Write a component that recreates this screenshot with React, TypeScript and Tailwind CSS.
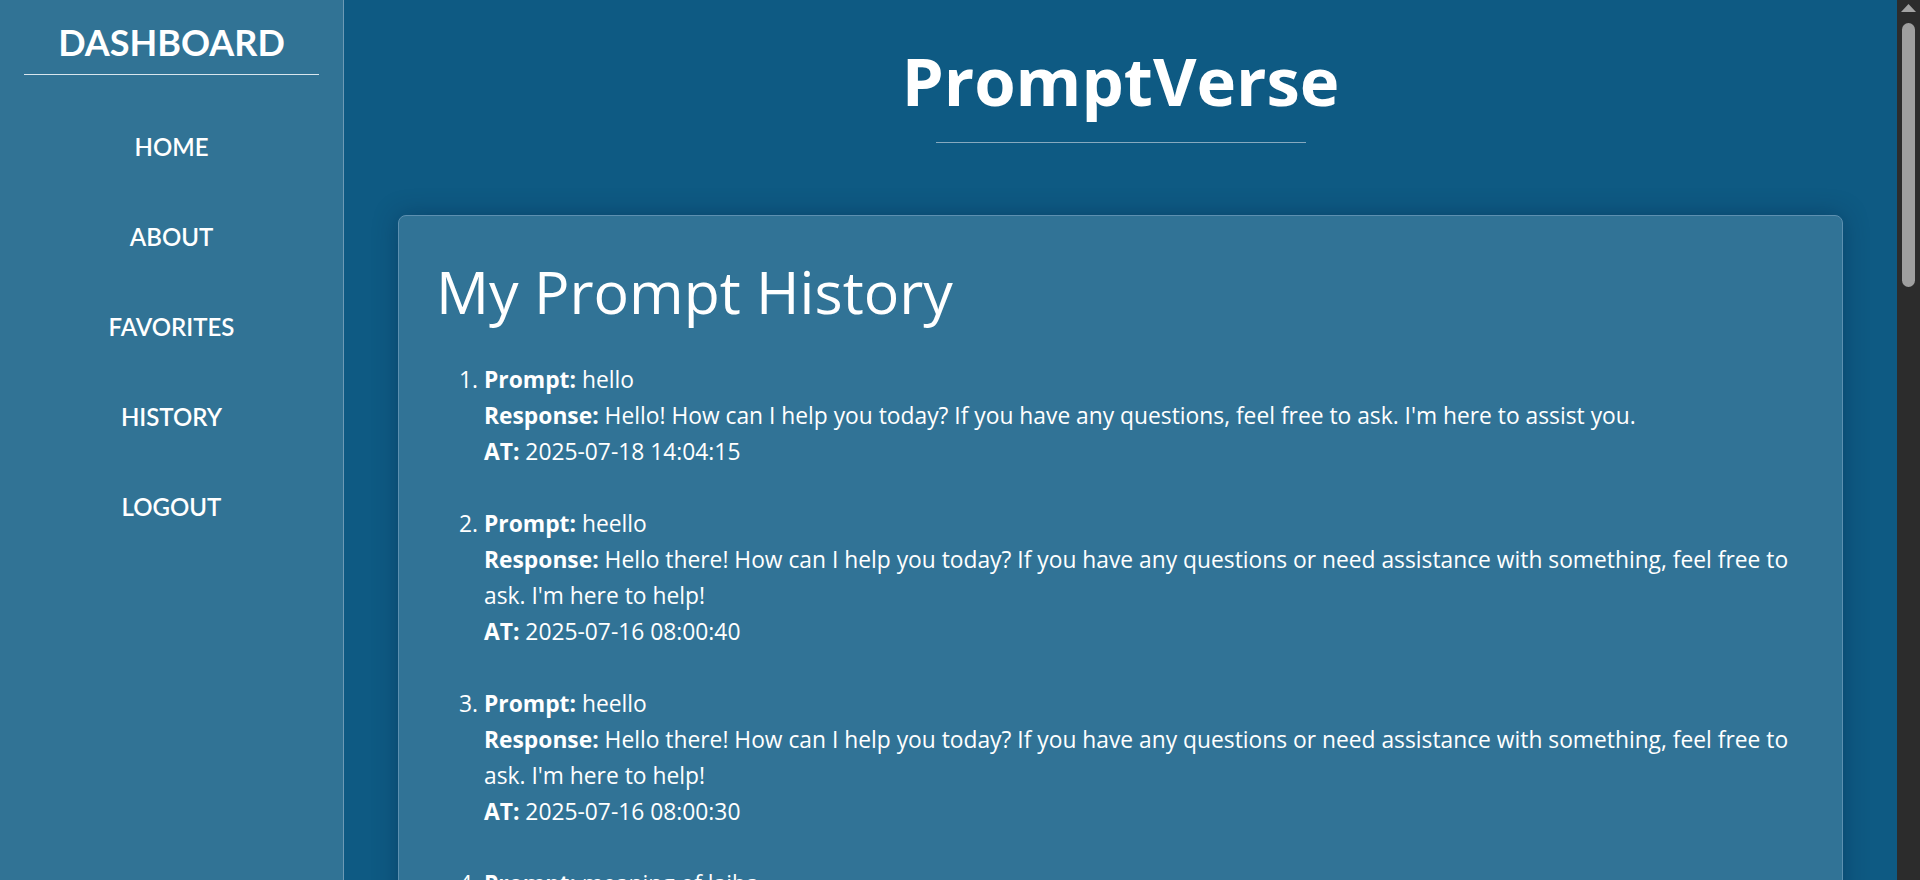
import React from "react";

const items = [
  {
    prompt: "hello",
    response:
      "Hello! How can I help you today? If you have any questions, feel free to ask. I'm here to assist you.",
    at: "2025-07-18 14:04:15",
  },
  {
    prompt: "heello",
    response:
      "Hello there! How can I help you today? If you have any questions or need assistance with something, feel free to ask. I'm here to help!",
    at: "2025-07-16 08:00:40",
  },
  {
    prompt: "heello",
    response:
      "Hello there! How can I help you today? If you have any questions or need assistance with something, feel free to ask. I'm here to help!",
    at: "2025-07-16 08:00:30",
  },
  {
    prompt: "meaning of laiba",
    response: "The name Laiba is of Arabic origin and is commonly used as a girl's name.",
    at: "2025-07-15 10:12:05",
  },
];

const nav = ["HOME", "ABOUT", "FAVORITES", "HISTORY", "LOGOUT"];

export default function App() {
  return (
    <div
      className="flex h-[880px] w-[1920px] overflow-hidden bg-[#0e5a83] text-white"
      style={{ fontFamily: '"Open Sans", Lato, sans-serif' }}
    >
      <aside
        className="flex w-[344px] shrink-0 flex-col border-r border-[#6d9ab5] bg-[#317395]"
        style={{ fontFamily: 'Lato, "Open Sans", sans-serif' }}
      >
        <h2 className="pt-[21px] text-center text-[36px] font-bold leading-[1.2]">DASHBOARD</h2>
        <div className="mx-[24px] mt-[10px] h-px bg-[#d9e6ee]" />
        <nav className="flex flex-col items-center gap-[61px] pt-[57px]">
          {nav.map((n) => (
            <a key={n} className="text-[24px] font-semibold leading-[29px] text-white">
              {n}
            </a>
          ))}
        </nav>
      </aside>

      <main className="flex min-w-0 flex-1 flex-col">
        <header className="flex flex-col items-center pt-[39px]">
          <h1 className="text-[67px] font-bold leading-[82px]">PromptVerse</h1>
          <div className="mt-[21px] h-px w-[370px] bg-[#86a9bf]" />
        </header>

        <section className="mx-[54px] mt-[72px] rounded-[8px] border border-[#5d90b0] bg-[#317396] px-[32px] pt-[40px] shadow-[0_0_24px_rgba(0,30,60,0.35)]">
          <h2 className="mb-[36px] ml-[5px] text-[59px] font-normal leading-[70px]">My Prompt History</h2>
          <ol className="list-decimal pl-[53px] text-[22.8px] leading-[36px]">
            {items.map((it, i) => (
              <li key={i} className="mb-[36px]">
                <div>
                  <strong className="font-bold">Prompt:</strong> {it.prompt}
                </div>
                <div>
                  <strong className="font-bold">Response:</strong> {it.response}
                </div>
                <div>
                  <strong className="font-bold">AT:</strong> {it.at}
                </div>
              </li>
            ))}
          </ol>
        </section>
      </main>

      <div className="flex w-[23px] shrink-0 flex-col items-center bg-[#2c2c2c]">
        <svg width="15" height="9" viewBox="0 0 15 9" className="mt-[4px]">
          <polygon points="7.5,0 15,8 0,8" fill="#a3a3a3" />
        </svg>
        <div className="mt-[10px] h-[264px] w-[13px] rounded-full bg-[#9f9f9f]" />
      </div>
    </div>
  );
}
